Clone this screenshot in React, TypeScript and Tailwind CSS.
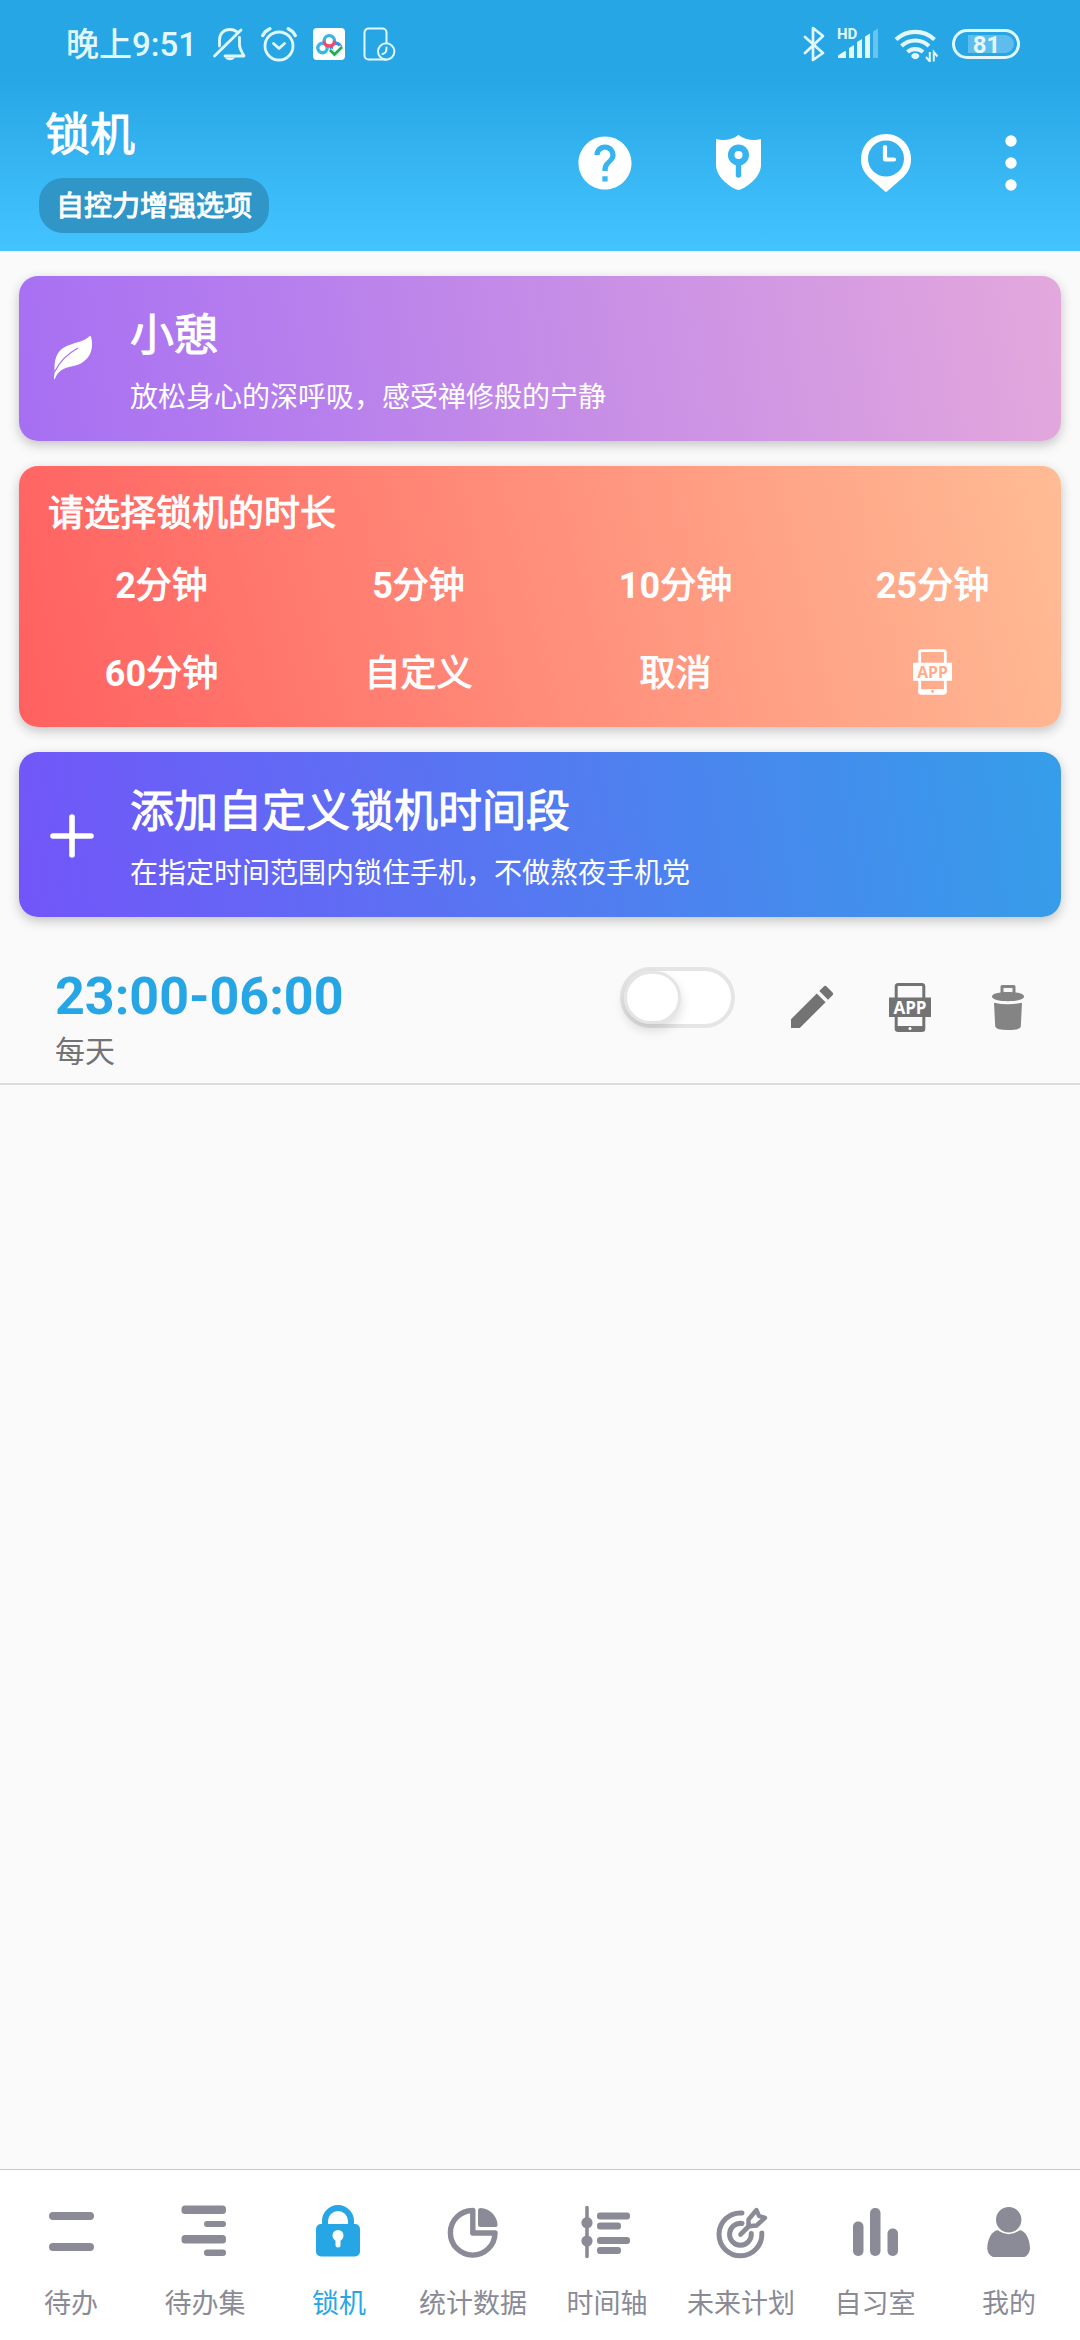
import type { ReactNode } from "react";
import { MdEdit } from "react-icons/md";

/* ---------- status bar icons ---------- */

function BellOffIcon() {
  return (
    <svg className="size-9" viewBox="0 0 36 36" fill="none" stroke="currentColor" strokeWidth="2.8" strokeLinecap="round">
      <path d="M8.500 20V14C8.500 7.500 13 3.500 19 3.500c2.500 0 4.500.6 6.500 2" />
      <path d="M28.500 11.500V19c0 4 2.200 6.500 4.500 11H14" strokeLinejoin="round" />
      <path d="M3.500 30 30 4" />
      <path d="M14 31.500h10c-1 1.800-2.800 2.800-5 2.800s-4-1-5-2.800z" fill="currentColor" stroke="none" />
    </svg>
  );
}

function AlarmIcon() {
  return (
    <svg className="size-9" viewBox="0 0 36 36" fill="none" stroke="currentColor" strokeWidth="2.8" strokeLinecap="round" strokeLinejoin="round">
      <circle cx="18" cy="20" r="14" />
      <path d="M12.500 17.500 18 22.500l5.500-5" />
      <path d="M1.800 9.500Q4 5 8.800 2.800M27.200 2.800Q32 5 34.200 9.500" strokeWidth="3.4" />
    </svg>
  );
}

function CloudDriveIcon() {
  return (
    <svg className="size-9" viewBox="0 0 36 36" fill="none">
      <defs>
        <linearGradient id="ring" x1="0" y1="0" x2="0" y2="1">
          <stop offset=".4" stopColor="#3cb4e6" />
          <stop offset=".6" stopColor="#ee4a6a" />
        </linearGradient>
      </defs>
      <rect x="2" y="2" width="32" height="32" rx="4" fill="#fff" />
      <circle cx="11.500" cy="22" r="4.700" stroke="#35b8e8" strokeWidth="3.400" />
      <circle cx="25" cy="22" r="4.700" stroke="#3a8fe2" strokeWidth="3.400" />
      <circle cx="18.300" cy="14.800" r="5.200" fill="#fff" stroke="url(#ring)" strokeWidth="3.400" />
      <path d="m19 24 4.500 4.500L31 21" stroke="#fff" strokeWidth="5" />
      <path d="m19 24 4.500 4.500L31 21" stroke="#1fae4e" strokeWidth="2.800" />
    </svg>
  );
}

function PhoneClockIcon() {
  return (
    <svg className="size-9" viewBox="0 0 36 36" fill="none" stroke="currentColor" strokeWidth="2" strokeLinecap="round">
      <path d="M25.500 17V6.500a4 4 0 0 0-4-4h-14a4 4 0 0 0-4 4v23a4 4 0 0 0 4 4H25" />
      <circle cx="25.200" cy="25.500" r="8.200" />
      <path d="M25.500 21.500c0 4-.5 5.500-4 6.500" />
    </svg>
  );
}

function BluetoothIcon() {
  return (
    <svg className="h-9 w-[22px]" viewBox="0 0 22 36" fill="none" stroke="currentColor" strokeWidth="2.7" strokeLinecap="round" strokeLinejoin="round">
      <path d="m2 11 18 16-10 7V2l10 8L2 27" />
    </svg>
  );
}

function SignalIcon() {
  return (
    <svg className="h-9 w-11" viewBox="0 0 44 36" fill="currentColor">
      <text x="0" y="13" fontSize="15" fontWeight="700" fontFamily="Roboto, sans-serif">HD</text>
      <path d="M1 32v-2.500L7 25.500 9 25v7zM12 32V22l5-3v13zM20 32V16l5-3v19zM28 32V10.500l5-3V32z" />
      <path d="M36 32V5.500l5-3V32z" opacity=".35" />
    </svg>
  );
}

function WifiIcon() {
  return (
    <svg className="h-9 w-[46px]" viewBox="0 0 46 36" fill="none" stroke="currentColor" strokeWidth="4.200" strokeLinecap="butt">
      <path d="M3 13.500a28 28 0 0 1 38.500 0" />
      <path d="M8.500 20a20 20 0 0 1 27.500 0" />
      <path d="M14.500 26a12 12 0 0 1 15.500 0" />
      <path d="M22.300 27c2.500 0 4 1.500 4 3s-2.500 3.200-4 3.200-4-1.700-4-3.200 1.500-3 4-3z" fill="currentColor" stroke="none" />
      <path d="M36.800 26v9.500l-3.800-4.500M40.800 35.500V26l3.700 4.500" strokeWidth="2" />
    </svg>
  );
}

function BatteryIcon() {
  return (
    <svg className="h-9 w-[70px]" viewBox="0 0 70 36" fill="none">
      <rect x="2.500" y="4.500" width="65" height="27" rx="13.500" stroke="currentColor" strokeWidth="3" />
      <path d="M17 9h37a9 9 0 0 1 0 18H17z" fill="#5fbdee" />
      <text x="35.500" y="26.500" fontSize="24" fontWeight="700" textAnchor="middle" fill="currentColor" fontFamily="Roboto, sans-serif">81</text>
    </svg>
  );
}

/* ---------- app bar icons ---------- */

function HelpIcon() {
  return (
    <svg className="size-14" viewBox="1.450 1.450 21.100 21.100" fill="currentColor">
      <path d="M12 2C6.480 2 2 6.480 2 12s4.480 10 10 10 10-4.480 10-10S17.520 2 12 2zm1 17h-2v-2h2v2zm2.070-7.750-.9.920C13.450 12.900 13 13.500 13 15h-2v-.5c0-1.100.45-2.100 1.170-2.830l1.240-1.260c.37-.36.590-.86.590-1.410 0-1.100-.9-2-2-2s-2 .9-2 2H8c0-2.210 1.790-4 4-4s4 1.790 4 4c0 .88-.36 1.680-.93 2.250z" />
    </svg>
  );
}

function ShieldKeyIcon() {
  return (
    <svg className="size-14" viewBox="0 0 56 56" fill="none">
      <path d="M28.500 0C22 5 13 6 6 4v26C6 41 18 51 26.500 54.500q2 .8 4 0C39 51 51 41 51 30V4C44 6 35 5 28.500 0z" fill="#fff" />
      <circle cx="28.500" cy="20" r="7.300" stroke="#38b3f1" strokeWidth="6.600" />
      <path d="M28.500 28v12" stroke="#38b3f1" strokeWidth="5.400" strokeLinecap="round" />
    </svg>
  );
}

function ClockPinIcon() {
  return (
    <svg className="size-14 overflow-visible" viewBox="0 0 56 56" fill="none">
      <path d="M28-1C14-1 3 10 3 24c0 8 3 13 7.500 18L27 56.500q1 .8 2 0L45.500 42C50 37 53 32 53 24 53 10 42-1 28-1z" fill="#fff" />
      <circle cx="28" cy="23.500" r="18" fill="#36b1f0" />
      <path d="M27 12v12.500h9" stroke="#fff" strokeWidth="4.200" strokeLinecap="round" strokeLinejoin="round" />
    </svg>
  );
}

function MoreIcon() {
  return (
    <svg className="size-14" viewBox="0 0 56 56" fill="currentColor">
      <circle cx="28" cy="6" r="5.700" />
      <circle cx="28" cy="28" r="5.700" />
      <circle cx="28" cy="50" r="5.700" />
    </svg>
  );
}

/* ---------- content icons ---------- */

function LeafIcon() {
  return (
    <svg className="size-11 overflow-visible" viewBox="-1 2 44 44" fill="none">
      <path d="M40 .5c3.500 13-1.500 25-15.500 29C16 31.500 8 32 3.500 43.500c-1.500-2 1-7 0-9.500C3 20 8 13 17 9.500 27 5.500 33 5.500 38 .5q1-.8 2 0z" fill="#fff" />
      <path d="M27 12C16 18 9 25 3.500 36" stroke="#ac73f0" strokeWidth="1.400" />
    </svg>
  );
}

function PlusIcon() {
  return (
    <svg className="size-11" viewBox="0 0 44 44" stroke="currentColor" strokeWidth="5.600" strokeLinecap="round">
      <path d="M22 3v38M3 22h38" />
    </svg>
  );
}

function AppPhoneIcon({ className, knockout }: { className: string; knockout: string }) {
  return (
    <svg className={className} viewBox="0 0 42 49" fill="none">
      <rect x="7.200" y="1.500" width="27.600" height="46" rx="2" stroke="currentColor" strokeWidth="3" />
      <path d="M6 43h30v4.500H6z" fill="currentColor" />
      <rect x="0" y="14.500" width="42" height="19.500" fill="currentColor" />
      <circle cx="21" cy="45.500" r="1.500" fill={knockout} />
      <text x="21" y="30.500" fontSize="17" fontWeight="700" textAnchor="middle" fill={knockout} fontFamily="'Open Sans', sans-serif">APP</text>
    </svg>
  );
}

function TrashIcon() {
  return (
    <svg className="h-[45px] w-8" viewBox="0 0 32 45" fill="#848484">
      <path d="M10 8V1.500h12V8" fill="none" stroke="#848484" strokeWidth="3" strokeLinejoin="round" />
      <path d="M0 11.500C0 8.500 7 7 16 7s16 1.500 16 4.500-7 4.700-16 4.700-16-1.700-16-4.700z" />
      <path d="M2 17.800q14 3 28 0l-1.200 23.700Q28 45 16 45T3.200 41.500z" />
    </svg>
  );
}

/* ---------- bottom navigation icons ---------- */

function NavIcon({ children }: { children: ReactNode }) {
  return (
    <svg className="size-14" viewBox="0 0 56 56" fill="currentColor">
      {children}
    </svg>
  );
}

const tabs: { label: string; active?: boolean; icon: ReactNode }[] = [
  {
    label: "待办",
    icon: (
      <>
        <rect x="6" y="8" width="45" height="8" rx="4" />
        <rect x="6" y="39" width="45" height="8" rx="4" />
      </>
    ),
  },
  {
    label: "待办集",
    icon: (
      <>
        <rect x="4.500" y="1.500" width="44.500" height="8.500" rx="3.500" />
        <rect x="27" y="17" width="22" height="6" rx="3" />
        <rect x="4.500" y="31" width="44.500" height="8.500" rx="3.500" />
        <rect x="27" y="45.500" width="22" height="6.500" rx="3" />
      </>
    ),
  },
  {
    label: "锁机",
    active: true,
    icon: (
      <>
        <rect x="5" y="20" width="44" height="32.500" rx="5" />
        <path d="M14 22v-5a13 13 0 0 1 26 0v5" fill="none" stroke="currentColor" strokeWidth="6" />
        <circle cx="27" cy="31.500" r="5.500" fill="#fff" />
        <path d="M27 32v9" stroke="#fff" strokeWidth="5" strokeLinecap="round" />
      </>
    ),
  },
  {
    label: "统计数据",
    icon: (
      <>
        <path d="M27.800 6.500A22.300 22.300 0 1 0 50 29H27.800z" fill="none" stroke="currentColor" strokeWidth="5.400" strokeLinejoin="round" />
        <path d="M35.500 4C45 4.500 52 12 52.600 20.500q.2 2.500-2 2.500H35.500Q33 23 33 20.500v-14Q33 4 35.500 4z" />
      </>
    ),
  },
  {
    label: "时间轴",
    icon: (
      <>
        <path d="M8 3.500v49" stroke="currentColor" strokeWidth="3.600" strokeLinecap="round" />
        <circle cx="8" cy="18.700" r="5.600" />
        <circle cx="8" cy="37" r="5.600" />
        <rect x="18" y="8.500" width="33" height="7" rx="3" />
        <rect x="18" y="18.500" width="24" height="7" rx="3" />
        <rect x="18" y="33" width="33" height="7" rx="3" />
        <rect x="18" y="43" width="24" height="7" rx="3" />
      </>
    ),
  },
  {
    label: "未来计划",
    icon: (
      <g fill="none" stroke="currentColor" strokeWidth="5" strokeLinecap="round" strokeLinejoin="round">
        <path d="M29 9A21.400 21.400 0 1 0 48.800 29" />
        <path d="M29 19.500A10.900 10.900 0 1 0 38.300 29.500" />
        <path d="M27.500 30.500 36 22" strokeWidth="4.600" />
        <path d="M35.500 15.500 43.500 6l2.500 6 6 1.800-8.500 7.700-8 .7z" strokeWidth="4.400" />
      </g>
    ),
  },
  {
    label: "自习室",
    icon: (
      <>
        <rect x="6" y="17.500" width="10.500" height="34.500" rx="5" />
        <rect x="23" y="4" width="10.500" height="48" rx="5" />
        <rect x="40.500" y="24.500" width="10.500" height="27.500" rx="5" />
      </>
    ),
  },
  {
    label: "我的",
    icon: (
      <>
        <circle cx="27.700" cy="15.700" r="12.700" />
        <path d="M15 26.500q1.500-.8 3 .5 9.700 6.500 19.400 0 1.600-1.200 3-.5C46 29 49 37 49 45q-1 6-5.500 8h-31.500Q7 51 6.300 45c0-8 3-16 8.700-18.500z" />
      </>
    ),
  },
];

const durations: { amount?: number; label: string }[] = [
  { amount: 2, label: "分钟" },
  { amount: 5, label: "分钟" },
  { amount: 10, label: "分钟" },
  { amount: 25, label: "分钟" },
  { amount: 60, label: "分钟" },
  { label: "自定义" },
  { label: "取消" },
];

function FeatureCard({ className, icon, title, text }: { className: string; icon: ReactNode; title: string; text: string }) {
  return (
    <button
      type="button"
      className={`flex items-center gap-9 rounded-[19px] pb-5 pl-[31px] pr-6 pt-[22px] text-left shadow-[0_4px_12px_rgba(0,0,0,0.22)] ${className}`}
    >
      {icon}
      <span className="flex min-w-0 flex-1 flex-col">
        <span className="text-[44px] leading-[76px] [-webkit-text-stroke:1px]">{title}</span>
        <span className="text-[28px] leading-[47px]">{text}</span>
      </span>
    </button>
  );
}

function Header() {
  return (
    <header className="bg-linear-to-b from-[#27a6e5] from-30% to-[#43c4ff] text-white">
      <div className="flex h-[88px] items-center justify-between pl-[66px] pr-[59px] text-[#e2f8ff]">
        <div className="flex items-center gap-[14px]">
          <span className="pt-[2px] text-[33px] font-medium leading-[44px]">晚上9:51</span>
          <BellOffIcon />
          <AlarmIcon />
          <CloudDriveIcon />
          <PhoneClockIcon />
        </div>
        <div className="flex items-center gap-3">
          <BluetoothIcon />
          <SignalIcon />
          <WifiIcon />
          <BatteryIcon />
        </div>
      </div>
      <div className="flex items-start justify-between pb-[18px] pl-[39px] pr-[41px]">
        <div className="flex flex-col items-start gap-3 pt-[18px]">
          <h1 className="pl-[6px] text-[45px] leading-[60px] [-webkit-text-stroke:1px]">锁机</h1>
          <button type="button" className="rounded-[24px] bg-[#3096c7] px-[17px] pt-[2px] text-[28px] leading-[53px] [-webkit-text-stroke:1px]">
            自控力增强选项
          </button>
        </div>
        <div className="flex pt-[47px]">
          <button type="button" aria-label="帮助" className="mr-[77px]"><HelpIcon /></button>
          <button type="button" aria-label="权限" className="mr-[92px]"><ShieldKeyIcon /></button>
          <button type="button" aria-label="记录" className="mr-[69px]"><ClockPinIcon /></button>
          <button type="button" aria-label="更多"><MoreIcon /></button>
        </div>
      </div>
    </header>
  );
}

export default function App() {
  return (
    <div className="flex min-h-screen flex-col bg-[#fafafa] font-[Roboto,'Noto_Sans_CJK_SC',sans-serif]">
      <Header />

      <main className="flex-1">
        <div className="flex flex-col gap-[25px] px-[19px] pt-[25px] text-white">
          <FeatureCard
            className="bg-[linear-gradient(81deg,#a66ff3,#e3a8dc)]"
            icon={<LeafIcon />}
            title="小憩"
            text="放松身心的深呼吸，感受禅修般的宁静"
          />

          <section className="rounded-[19px] bg-[linear-gradient(76deg,#ff6060,#ffbc95)] pb-[9px] pl-[14px] pt-5 shadow-[0_4px_12px_rgba(0,0,0,0.22)]">
            <h2 className="pl-[15px] text-[36px] leading-[56px] [-webkit-text-stroke:1px]">请选择锁机的时长</h2>
            <div className="grid grid-cols-4 text-[36px] leading-[88px]">
              {durations.map((d) => (
                <button key={`${d.amount}${d.label}`} type="button">
                  {d.amount && <span className="font-bold">{d.amount}</span>}
                  <span className="[-webkit-text-stroke:1px]">{d.label}</span>
                </button>
              ))}
              <button type="button" aria-label="应用白名单" className="flex items-center justify-center pb-1">
                <AppPhoneIcon className="h-[46px] w-[39px]" knockout="#ffac8b" />
              </button>
            </div>
          </section>

          <FeatureCard
            className="bg-[linear-gradient(81deg,#7355f9,#359ee9)]"
            icon={<PlusIcon />}
            title="添加自定义锁机时间段"
            text="在指定时间范围内锁住手机，不做熬夜手机党"
          />
        </div>

        <ul className="pt-12">
          <li className="flex items-start border-b-2 border-[#dcdcdc] pb-2 pl-[55px] pr-11 text-[#737373]">
            <label htmlFor="period-0" className="flex flex-1 flex-col">
              <span className="text-[52px] font-bold leading-[64px] text-[#27a6e5]">23:00-06:00</span>
              <span className="text-[30px] leading-[46px]">每天</span>
            </label>
            <input
              id="period-0"
              type="checkbox"
              role="switch"
              className="mr-[49px] mt-[2px] flex h-[61px] w-[115px] appearance-none items-center rounded-full border-4 border-[#e5e5e5] bg-white before:block before:h-[53px] before:w-[57px] before:rounded-full before:border-[3px] before:border-[#e5e5e5] before:bg-white before:shadow-[0_6px_12px_rgba(0,0,0,0.14)] checked:bg-[#27a6e5] checked:before:translate-x-[50px]"
            />
            <div className="flex items-center gap-[42px] pt-[14px]">
              <button type="button" aria-label="编辑"><MdEdit className="size-14" /></button>
              <button type="button" aria-label="应用白名单" className="flex size-14 items-center justify-center">
                <AppPhoneIcon className="h-[49px] w-[42px]" knockout="#fff" />
              </button>
              <button type="button" aria-label="删除" className="flex size-14 items-center justify-center"><TrashIcon /></button>
            </div>
          </li>
        </ul>
      </main>

      <nav className="flex border-t border-[#c8c8c8] bg-white px-1 pb-4 pt-[34px]">
        {tabs.map((t) => (
          <a
            key={t.label}
            href="#"
            aria-current={t.active ? "page" : undefined}
            className={`flex flex-1 basis-0 flex-col items-center gap-6 text-[27px] leading-10 ${t.active ? "text-[#27a6e5]" : "text-[#8a8b96]"}`}
          >
            <NavIcon>{t.icon}</NavIcon>
            <span className="whitespace-nowrap">{t.label}</span>
          </a>
        ))}
      </nav>
    </div>
  );
}
